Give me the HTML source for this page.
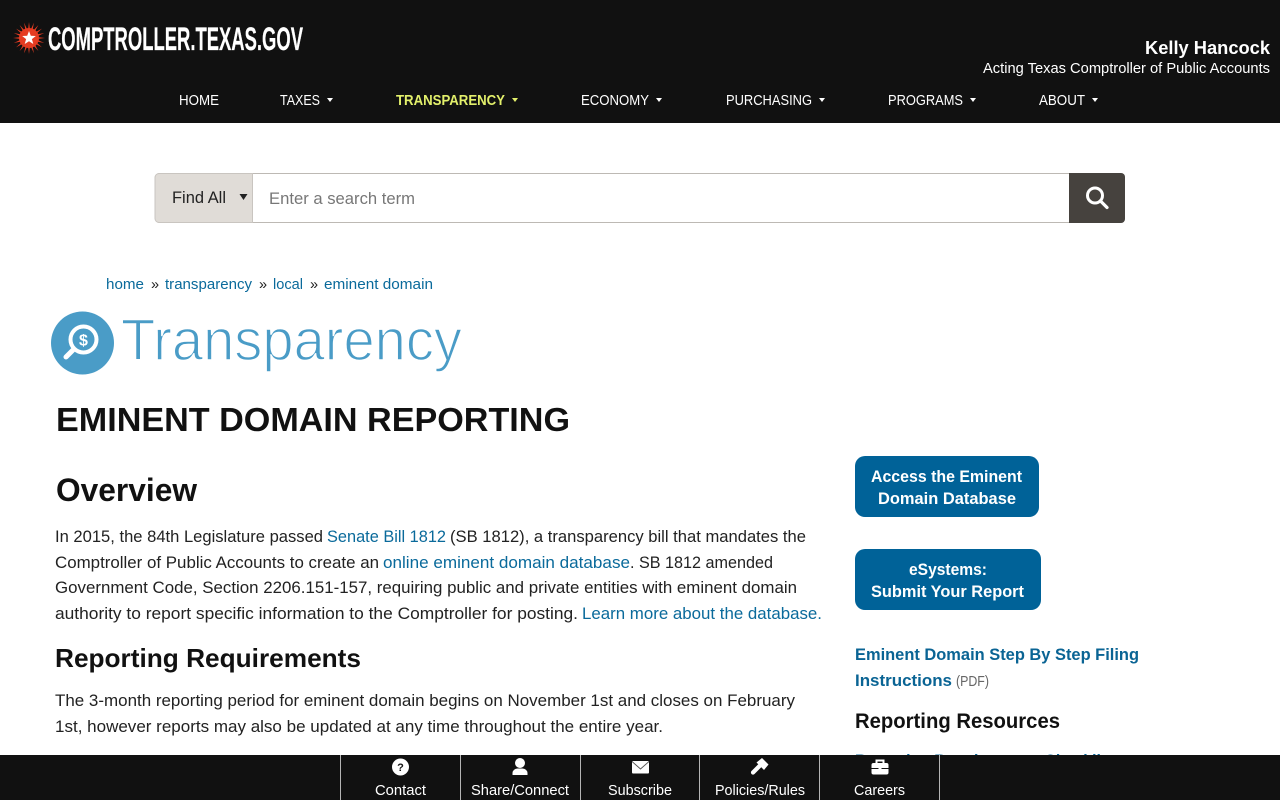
<!DOCTYPE html>
<html lang="en">
<head>
<meta charset="utf-8">
<title>Eminent Domain Reporting</title>
<style>
html,body{margin:0;padding:0;width:1280px;height:800px;overflow:hidden;background:#fff}
svg{position:absolute;left:0;top:0;display:block}
text{font-family:"Liberation Sans",Arial,sans-serif}
.n{font-size:14.5px;fill:#fff}
.b{font-size:16.5px;fill:#222}
.l{font-size:16.5px;fill:#0a6a9b}
.c{font-size:14.5px;fill:#0a6a9b}
.w{font-size:16.5px;font-weight:700;fill:#fff}
.s{font-size:16.5px;font-weight:700;fill:#0a6494}
.f{font-size:14.5px;fill:#fff}
</style>
</head>
<body>
<svg width="1280" height="800" viewBox="0 0 1280 800" xmlns="http://www.w3.org/2000/svg">
<rect width="1280" height="123" fill="#111"/>
<!-- star logo -->
<g fill="#e53c22">
<polygon points="29,22 31,38 29,54 27,38"/>
<polygon points="29,22 31,38 29,54 27,38" transform="rotate(18 29 38)"/>
<polygon points="29,22 31,38 29,54 27,38" transform="rotate(36 29 38)"/>
<polygon points="29,22 31,38 29,54 27,38" transform="rotate(54 29 38)"/>
<polygon points="29,22 31,38 29,54 27,38" transform="rotate(72 29 38)"/>
<polygon points="29,22 31,38 29,54 27,38" transform="rotate(90 29 38)"/>
<polygon points="29,22 31,38 29,54 27,38" transform="rotate(108 29 38)"/>
<polygon points="29,22 31,38 29,54 27,38" transform="rotate(126 29 38)"/>
<polygon points="29,22 31,38 29,54 27,38" transform="rotate(144 29 38)"/>
<polygon points="29,22 31,38 29,54 27,38" transform="rotate(162 29 38)"/>
<circle cx="29" cy="38" r="10"/>
</g>
<polygon points="29,31 30.800,35.800 35.800,36 31.900,39.100 33.300,44 29,41.200 24.700,44 26.100,39.100 22.200,36 27.200,35.800" fill="#fff"/>
<text x="48" y="50" font-size="32" font-weight="700" fill="#fff" stroke="#fff" stroke-width=".2" textLength="255" lengthAdjust="spacingAndGlyphs">COMPTROLLER.TEXAS.GOV</text>
<text x="1145" y="54" font-size="18" font-weight="700" fill="#fff" textLength="125" lengthAdjust="spacingAndGlyphs">Kelly Hancock</text>
<text x="983" y="73" font-size="15" fill="#fff" textLength="287" lengthAdjust="spacingAndGlyphs">Acting Texas Comptroller of Public Accounts</text>
<!-- nav -->
<text class="n" x="179" y="105" textLength="40" lengthAdjust="spacingAndGlyphs">HOME</text>
<text class="n" x="280" y="105" textLength="40" lengthAdjust="spacingAndGlyphs">TAXES</text>
<polygon points="327,98 333,98 330,102" fill="#fff"/>
<text x="396" y="105" font-size="14.5" font-weight="700" fill="#e3f06b" textLength="109" lengthAdjust="spacingAndGlyphs">TRANSPARENCY</text>
<polygon points="512,98 518,98 515,102" fill="#e3f06b"/>
<text class="n" x="581" y="105" textLength="68" lengthAdjust="spacingAndGlyphs">ECONOMY</text>
<polygon points="656,98 662,98 659,102" fill="#fff"/>
<text class="n" x="726" y="105" textLength="86" lengthAdjust="spacingAndGlyphs">PURCHASING</text>
<polygon points="819,98 825,98 822,102" fill="#fff"/>
<text class="n" x="888" y="105" textLength="75" lengthAdjust="spacingAndGlyphs">PROGRAMS</text>
<polygon points="970,98 976,98 973,102" fill="#fff"/>
<text class="n" x="1039" y="105" textLength="46" lengthAdjust="spacingAndGlyphs">ABOUT</text>
<polygon points="1092,98 1098,98 1095,102" fill="#fff"/>

<!-- search -->
<rect x="155.500" y="173.500" width="969" height="49" rx="4" fill="#fff" stroke="#bdb9b4"/>
<path d="M159 173.500H252.500V222.500H159a4 4 0 0 1-4-4V177.500a4 4 0 0 1 4-4z" fill="#e0dcd7" stroke="#c9c5c0"/>
<text x="172" y="203" font-size="16.500" fill="#222" textLength="54" lengthAdjust="spacingAndGlyphs">Find All</text>
<polygon points="239.500,194 247.500,194 243.500,200" fill="#222"/>
<text x="269" y="204" font-size="16.500" fill="#777" textLength="146" lengthAdjust="spacingAndGlyphs">Enter a search term</text>
<path d="M1069 173H1121a4 4 0 0 1 4 4V219a4 4 0 0 1-4 4H1069z" fill="#46423e"/>
<circle cx="1095" cy="195.500" r="7.500" fill="none" stroke="#fff" stroke-width="3"/>
<path d="M1100.500 201L1107 207.500" stroke="#fff" stroke-width="3.200" stroke-linecap="round"/>

<!-- breadcrumb -->
<text class="c" x="106" y="289" textLength="38" lengthAdjust="spacingAndGlyphs">home</text>
<text x="151" y="289" font-size="14.500" fill="#222">»</text>
<text class="c" x="165" y="289" textLength="87" lengthAdjust="spacingAndGlyphs">transparency</text>
<text x="259" y="289" font-size="14.500" fill="#222">»</text>
<text class="c" x="273" y="289" textLength="30" lengthAdjust="spacingAndGlyphs">local</text>
<text x="310" y="289" font-size="14.500" fill="#222">»</text>
<text class="c" x="324" y="289" textLength="109" lengthAdjust="spacingAndGlyphs">eminent domain</text>

<!-- section logo -->
<circle cx="82.500" cy="343" r="31.500" fill="#4a9cc7"/>
<path d="M73 350L66 357" stroke="#fff" stroke-width="5" stroke-linecap="round"/>
<circle cx="83.500" cy="339.500" r="13" fill="#4a9cc7" stroke="#fff" stroke-width="4"/>
<text x="83.500" y="345.500" font-size="16" font-weight="700" fill="#fff" text-anchor="middle">$</text>
<text x="121" y="360" font-size="58" fill="#4a9cc7" stroke="#fff" stroke-width="1.500" textLength="341" lengthAdjust="spacingAndGlyphs">Transparency</text>

<!-- main -->
<text x="56" y="431" font-size="33" font-weight="700" fill="#111" textLength="514" lengthAdjust="spacingAndGlyphs">EMINENT DOMAIN REPORTING</text>
<text x="56" y="501" font-size="32" font-weight="700" fill="#111" textLength="141" lengthAdjust="spacingAndGlyphs">Overview</text>

<text class="b" x="55" y="542" textLength="268" lengthAdjust="spacingAndGlyphs">In 2015, the 84th Legislature passed</text>
<text class="l" x="327" y="542" textLength="119" lengthAdjust="spacingAndGlyphs">Senate Bill 1812</text>
<text class="b" x="450" y="542" textLength="356" lengthAdjust="spacingAndGlyphs">(SB 1812), a transparency bill that mandates the</text>

<text class="b" x="55" y="568" textLength="324" lengthAdjust="spacingAndGlyphs">Comptroller of Public Accounts to create an</text>
<text class="l" x="383" y="568" textLength="247" lengthAdjust="spacingAndGlyphs">online eminent domain database</text>
<text class="b" x="630" y="568" textLength="143" lengthAdjust="spacingAndGlyphs">. SB 1812 amended</text>

<text class="b" x="55" y="593" textLength="742" lengthAdjust="spacingAndGlyphs">Government Code, Section 2206.151-157, requiring public and private entities with eminent domain</text>

<text class="b" x="55" y="619" textLength="523" lengthAdjust="spacingAndGlyphs">authority to report specific information to the Comptroller for posting.</text>
<text class="l" x="582" y="619" textLength="240" lengthAdjust="spacingAndGlyphs">Learn more about the database.</text>

<text x="55" y="667" font-size="26" font-weight="700" fill="#111" textLength="306" lengthAdjust="spacingAndGlyphs">Reporting Requirements</text>

<text class="b" x="55" y="706" textLength="740" lengthAdjust="spacingAndGlyphs">The 3-month reporting period for eminent domain begins on November 1st and closes on February</text>
<text class="b" x="55" y="732" textLength="608" lengthAdjust="spacingAndGlyphs">1st, however reports may also be updated at any time throughout the entire year.</text>

<!-- sidebar -->
<rect x="855" y="456" width="184" height="61" rx="10" fill="#006298"/>
<text class="w" x="871" y="482" textLength="151" lengthAdjust="spacingAndGlyphs">Access the Eminent</text>
<text class="w" x="878" y="504" textLength="138" lengthAdjust="spacingAndGlyphs">Domain Database</text>
<rect x="855" y="549" width="186" height="61" rx="10" fill="#006298"/>
<text class="w" x="909" y="575" textLength="78" lengthAdjust="spacingAndGlyphs">eSystems:</text>
<text class="w" x="871" y="597" textLength="153" lengthAdjust="spacingAndGlyphs">Submit Your Report</text>

<text class="s" x="855" y="660" textLength="284" lengthAdjust="spacingAndGlyphs">Eminent Domain Step By Step Filing</text>
<text class="s" x="855" y="686" textLength="97" lengthAdjust="spacingAndGlyphs">Instructions</text>
<text x="956" y="686" font-size="15" fill="#666" textLength="33" lengthAdjust="spacingAndGlyphs">(PDF)</text>
<text x="855" y="728" font-size="21" font-weight="700" fill="#111" textLength="205" lengthAdjust="spacingAndGlyphs">Reporting Resources</text>
<text class="s" x="855" y="766" textLength="260" lengthAdjust="spacingAndGlyphs">Reporting Requirements Checklist</text>

<!-- footer -->
<rect y="755" width="1280" height="45" fill="#111"/>
<path d="M340.500 755V800M460.500 755V800M580.500 755V800M699.500 755V800M819.500 755V800M939.500 755V800" stroke="#b5b5b5" stroke-width="1"/>
<circle cx="400.500" cy="767" r="8.500" fill="#fff"/>
<text x="400.500" y="771" font-size="11" font-weight="700" fill="#111" text-anchor="middle">?</text>
<circle cx="520" cy="763" r="5" fill="#fff"/>
<path d="M512.500 775V773a5 4.500 0 0 1 5-4.500h5a5 4.500 0 0 1 5 4.500V775z" fill="#fff"/>
<rect x="632" y="761" width="17" height="12.500" rx="1" fill="#fff"/>
<path d="M632 761.500L640.500 769L649 761.500" fill="none" stroke="#555" stroke-width=".9"/>
<path d="M753 772.500L759.500 766" stroke="#fff" stroke-width="4.200" stroke-linecap="round"/>
<path d="M756.500 762.500L762 758L768.500 764.500L764 770z" fill="#fff"/>
<rect x="871.500" y="763" width="17" height="11.500" rx="2" fill="#fff"/>
<path d="M876.500 763V760.500h7V763" fill="none" stroke="#fff" stroke-width="2"/>
<path d="M871.500 768.500H888.500" stroke="#111" stroke-width="1"/>
<rect x="878.500" y="767" width="3" height="3" fill="#fff"/>
<text class="f" x="375" y="795" textLength="51" lengthAdjust="spacingAndGlyphs">Contact</text>
<text class="f" x="471" y="795" textLength="98" lengthAdjust="spacingAndGlyphs">Share/Connect</text>
<text class="f" x="608" y="795" textLength="64" lengthAdjust="spacingAndGlyphs">Subscribe</text>
<text class="f" x="715" y="795" textLength="90" lengthAdjust="spacingAndGlyphs">Policies/Rules</text>
<text class="f" x="854" y="795" textLength="51" lengthAdjust="spacingAndGlyphs">Careers</text>
</svg>
</body>
</html>
